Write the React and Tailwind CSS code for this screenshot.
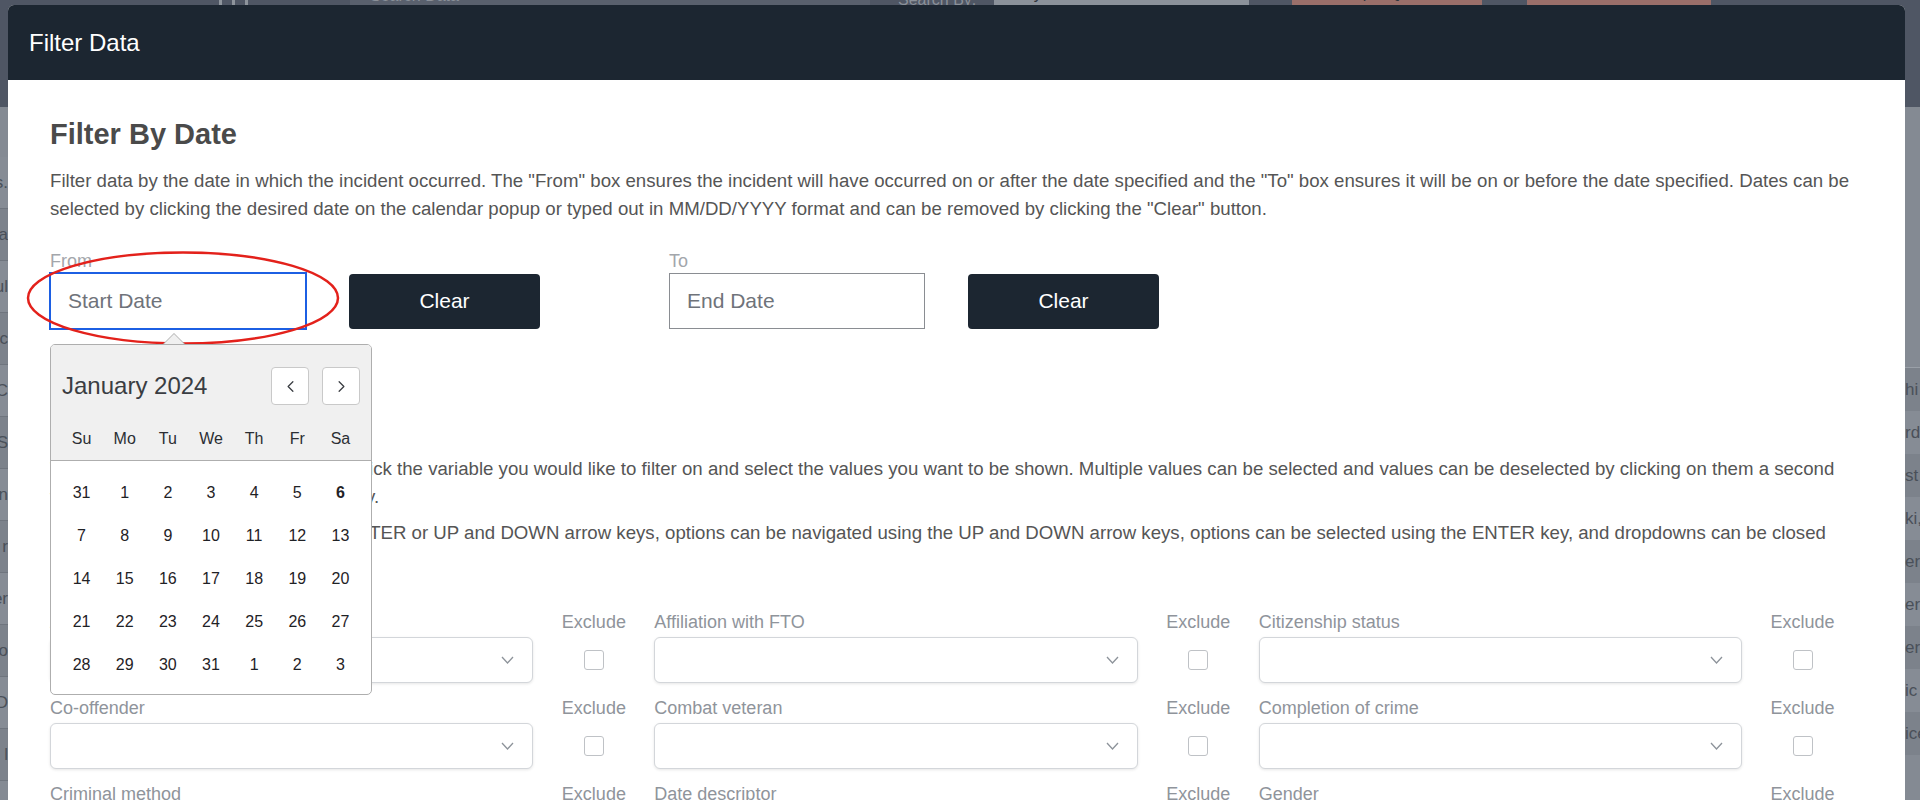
import React from 'react';
import { ChevronLeft, ChevronRight } from 'lucide-react';

const weeks = [
  [31, 1, 2, 3, 4, 5, 6],
  [7, 8, 9, 10, 11, 12, 13],
  [14, 15, 16, 17, 18, 19, 20],
  [21, 22, 23, 24, 25, 26, 27],
  [28, 29, 30, 31, 1, 2, 3],
];

const dayNames = ['Su', 'Mo', 'Tu', 'We', 'Th', 'Fr', 'Sa'];

const variables = [
  'Active duty military',
  'Affiliation with FTO',
  'Citizenship status',
  'Co-offender',
  'Combat veteran',
  'Completion of crime',
  'Criminal method',
  'Date descriptor',
  'Gender',
];

const leftRows = ['s.', 'a', 'ul', 'ac', 'C', 'S', 'n', 'r', 'er', 'o', 'D', 'l'];
const rightRows = ['hi', 'rd', 'st', 'ki,', 'er', 'er', 'er', 'ic', 'ice'];

// the page behind the modal, only its edges show
const Backdrop = () => (
  <div className="flex h-full flex-col">
    <div className="flex h-[107px] items-start bg-[#4f5664] text-[16px] text-[#2f343c]">
      <div className="ml-[219px] -mt-[20px] flex h-[32px] w-[48px] gap-[10px]">
        <span className="h-full w-[3px] bg-[#8e949c]" />
        <span className="h-full w-[3px] bg-[#8e949c]" />
        <span className="h-full w-[3px] bg-[#8e949c]" />
      </div>
      <div className="ml-[83px] -mt-[20px] flex h-[28px] w-[520px] items-end gap-[10px] bg-[#59606d] pl-[20px] text-[#8a9099]">
        <span>Search Data</span>
      </div>
      <span className="ml-[28px] -mt-[12px] text-[#8a9099]">Search By:</span>
      <div className="ml-[18px] -mt-[20px] flex h-[26px] w-[255px] items-end bg-[#8b919a] pl-[20px]">Any</div>
      <div className="ml-[43px] -mt-[20px] flex h-[25px] w-[190px] items-end justify-center bg-[#9a6f6a]">Sample Queries</div>
      <div className="ml-[45px] -mt-[20px] flex h-[25px] w-[184px] items-end justify-center bg-[#9a6f6a]">Visualize Data</div>
    </div>
    <div className="flex flex-1 justify-between bg-[#848a93]">
      <div className="flex w-[300px] flex-col pt-[50px] text-[17px] text-[#4a5059]">
        {leftRows.map((t, i) => (
          <div key={i} className={`flex h-[52px] items-center justify-end border-b border-[#6f757e] pr-[292px] ${i % 2 ? 'bg-[#7c828b]' : 'bg-[#868c95]'}`}>
            {t}
          </div>
        ))}
      </div>
      <div className="flex w-[300px] flex-col pt-[260px] text-[17px] text-[#4a5059]">
        <div className="border-t border-[#9aa0a8]" />
        {rightRows.map((t, i) => (
          <div key={i} className={`flex h-[43px] items-center pl-[285px] ${i % 2 ? 'bg-[#868c95]' : 'bg-[#7c828b]'}`}>
            {t}
          </div>
        ))}
      </div>
    </div>
  </div>
);

const Calendar = () => (
  <div className="absolute left-0 top-[71px] z-10 w-[322px]">
    <div className="absolute -top-[11px] left-[113px] h-0 w-0 border-x-[11px] border-b-[11px] border-x-transparent border-b-[#aeaeae]" />
    <div className="absolute -top-[10px] left-[114px] h-0 w-0 border-x-[10px] border-b-[10px] border-x-transparent border-b-[#f0f0f0]" />
    <div className="overflow-hidden rounded-[5px] border border-[#aeaeae] bg-white">
      <div className="h-[116px] border-b border-[#aeaeae] bg-[#f0f0f0]">
        <div className="flex items-center justify-between pl-[11px] pr-[11px] pt-[22px]">
          <span className="text-[24px] text-[#3a3d42]">January 2024</span>
          <div className="flex gap-[13px]">
            <button className="flex h-[38px] w-[38px] items-center justify-center rounded-[4px] border border-[#c9c9c9] bg-white text-[#3a3d42]">
              <ChevronLeft size={19} strokeWidth={1.6} />
            </button>
            <button className="flex h-[38px] w-[38px] items-center justify-center rounded-[4px] border border-[#c9c9c9] bg-white text-[#3a3d42]">
              <ChevronRight size={19} strokeWidth={1.6} />
            </button>
          </div>
        </div>
        <div className="mt-[24px] grid grid-cols-7 px-[9px] text-[16px] leading-[20px] text-[#2b2e33]">
          {dayNames.map((d) => (
            <span key={d} className="text-center">{d}</span>
          ))}
        </div>
      </div>
      <div className="grid grid-cols-7 px-[9px] pb-[8px] pt-[10px] text-[16px] text-[#1f2226]">
        {weeks.flat().map((d, i) => (
          <span key={i} className={`flex h-[43px] items-center justify-center ${i === 6 ? 'font-bold' : ''}`}>
            {d}
          </span>
        ))}
      </div>
    </div>
  </div>
);

const DateField = ({ label, placeholder, focused, children }) => (
  <div className="flex flex-col">
    <span className="mb-[1px] text-[18px] leading-[22px] text-[#a3a6ab]">{label}</span>
    <div className="flex items-center gap-[43px]">
      <div className="relative">
        <div
          className={`flex h-[56px] w-[256px] items-center border bg-white pl-[17px] text-[21px] text-[#6f737a] ${
            focused ? 'border-[#1c5fe3] shadow-[0_0_0_1px_#1c5fe3]' : 'border-[#8a8d92]'
          }`}
        >
          {placeholder}
        </div>
        {children}
      </div>
      <button className="h-[55px] w-[191px] rounded-[4px] bg-[#1c2631] text-[21px] text-white">Clear</button>
    </div>
  </div>
);

const SelectBox = () => (
  <div className="flex h-[46px] w-4/5 items-center justify-end rounded-[6px] border border-[#d3d6da] bg-white pr-[18px] shadow-[0_1px_3px_rgba(0,0,0,0.1)]">
    <svg width="13" height="8" viewBox="0 0 13 8" fill="none">
      <polyline points="1,1 6.5,7 12,1" stroke="#8d939a" strokeWidth="1.3" />
    </svg>
  </div>
);

const VariableFilter = ({ name }) => (
  <div className="flex flex-col">
    <div className="flex text-[18px] leading-[22px] text-[#8f949b]">
      <span className="w-4/5">{name}</span>
      <span className="w-1/5 text-center">Exclude</span>
    </div>
    <div className="mt-[4px] flex items-center">
      <SelectBox />
      <div className="flex w-1/5 justify-center">
        <span className="h-[20px] w-[20px] rounded-[3px] border border-[#bfc2c6] bg-white" />
      </div>
    </div>
  </div>
);

export default function App() {
  return (
    <div className="relative h-[800px] w-[1920px] overflow-hidden bg-[#848a93] font-['Liberation_Sans',Arial,sans-serif]">
      <Backdrop />

      <div className="absolute left-[8px] top-[5px] h-[820px] w-[1897px] rounded-t-[6px] bg-white">
        <div className="flex h-[75px] items-center rounded-t-[6px] bg-[#1c2631] px-[21px]">
          <h1 className="text-[24px] text-white">Filter Data</h1>
        </div>

        <div className="px-[42px] pt-[37px]">
          <h2 className="text-[29px] font-bold leading-[34px] text-[#4a4a4a]">Filter By Date</h2>
          <p className="mt-[16px] text-[18.65px] leading-[28px] text-[#555]">
            Filter data by the date in which the incident occurred. The "From" box ensures the incident will have
            occurred on or after the date specified and the "To" box ensures it will be on or before the date
            specified. Dates can be selected by clicking the desired date on the calendar popup or typed out in
            MM/DD/YYYY format and can be removed by clicking the "Clear" button.
          </p>

          <div className="mt-[27px] flex gap-[129px]">
            <DateField label="From" placeholder="Start Date" focused>
              <Calendar />
            </DateField>
            <DateField label="To" placeholder="End Date" />
          </div>

          <h2 className="mt-[76px] text-[29px] font-bold leading-[34px] text-[#4a4a4a]">Filter By Variable</h2>
          <p className="mt-[16px] text-[18.65px] leading-[28px] text-[#555]">
            To filter the data by variables, simply click the variable you would like to filter on and select the
            values you want to be shown. Multiple values can be selected and values can be deselected by clicking on
            them a second time. Results then update automatically.
          </p>
          <p className="mt-[8px] text-[18.65px] leading-[28px] text-[#555]">
            Dropdowns may be opened via the ENTER or UP and DOWN arrow keys, options can be navigated using the UP
            and DOWN arrow keys, options can be selected using the ENTER key, and dropdowns can be closed using the
            ESC key.
          </p>

          <div className="mt-[36px] grid grid-cols-3 gap-y-[14px]">
            {variables.map((v) => (
              <VariableFilter key={v} name={v} />
            ))}
          </div>
        </div>
      </div>

      <svg className="absolute left-[26px] top-[250px]" width="314" height="96" viewBox="0 0 314 96" fill="none">
        <ellipse cx="157" cy="48" rx="155" ry="45.5" stroke="#e3211b" strokeWidth="2.5" />
      </svg>
    </div>
  );
}
